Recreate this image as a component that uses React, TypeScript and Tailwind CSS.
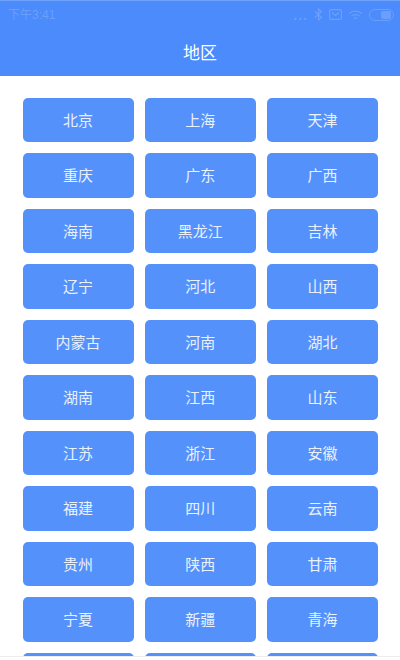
const regions = [
  '北京', '上海', '天津',
  '重庆', '广东', '广西',
  '海南', '黑龙江', '吉林',
  '辽宁', '河北', '山西',
  '内蒙古', '河南', '湖北',
  '湖南', '江西', '山东',
  '江苏', '浙江', '安徽',
  '福建', '四川', '云南',
  '贵州', '陕西', '甘肃',
  '宁夏', '新疆', '青海',
];

function StatusIcons() {
  return (
    <div className="flex items-center gap-[6px] text-[#6a9ffd]">
      <span className="text-[12px] leading-none tracking-[1px] font-bold">...</span>
      <svg className="w-[9px] h-[13px]" viewBox="0 0 9 13" fill="none" stroke="currentColor" strokeWidth="1.2">
        <path d="M1 3.5l6.5 6L4.5 12V1l3 2.5L1 9.5" />
      </svg>
      <svg className="w-[13px] h-[11px]" viewBox="0 0 13 11" fill="none" stroke="currentColor" strokeWidth="1.2">
        <rect x="0.6" y="0.6" width="11.8" height="9.8" rx="1.5" />
        <path d="M3 3.5l3.5 3 3.5-3" />
      </svg>
      <svg className="w-[15px] h-[10px]" viewBox="0 0 15 10" fill="none" stroke="currentColor" strokeWidth="1.2">
        <path d="M1 3.5c3.6-3.2 9.4-3.2 13 0M3.5 6c2.2-1.9 5.8-1.9 8 0M6 8.5c.8-.7 2.2-.7 3 0" />
      </svg>
      <div className="w-[25px] h-[12px] rounded-[6px] border border-[#6a9ffd] flex items-center justify-end pr-[2px]">
        <div className="w-[10px] h-[8px] rounded-[2px] bg-[#6a9ffd]" />
      </div>
    </div>
  );
}

export default function App() {
  return (
    <div className="w-[400px] h-[660px] bg-white flex flex-col overflow-hidden font-['Noto_Sans_CJK_SC','Noto_Sans',sans-serif]">
      <header className="h-[76px] shrink-0 bg-[#4b8bfb] border-t border-[#6fa3fc] flex flex-col">
        <div className="h-[27px] pl-[8px] pr-[6px] flex items-center justify-between">
          <span className="text-[12px] text-[#6a9ffd] font-['Liberation_Sans','Noto_Sans_CJK_SC',sans-serif]">下午3:41</span>
          <StatusIcons />
        </div>
        <h1 className="text-center text-[17px] leading-[47px] text-white">地区</h1>
      </header>
      <main className="h-[580px] shrink-0 overflow-hidden pt-[22px] pl-[22.6px] pr-[22px]">
        <div className="grid grid-cols-3 gap-x-[11.3px] gap-y-[11.2px]">
          {regions.map((name) => (
            <button
              key={name}
              className="h-[44.3px] rounded-[5px] bg-[#5591fb] text-[15px] text-[#e9f1ff] flex items-center justify-center"
            >
              {name}
            </button>
          ))}
          {/* next row, only its top edge shows above the fold */}
          <div className="h-[44.3px] rounded-[5px] bg-[#5591fb]" />
          <div className="h-[44.3px] rounded-[5px] bg-[#5591fb]" />
          <div className="h-[44.3px] rounded-[5px] bg-[#5591fb]" />
        </div>
      </main>
      <div className="h-[4px] shrink-0 border-t border-[#ececec] bg-white" />
    </div>
  );
}
